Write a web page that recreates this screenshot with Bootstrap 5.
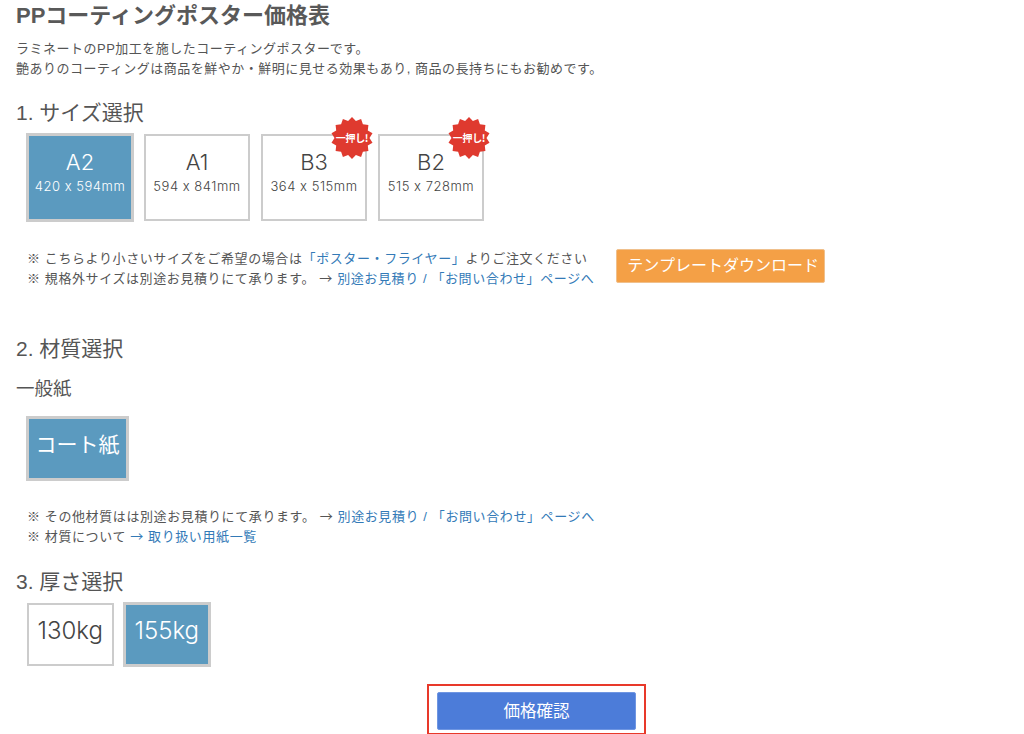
<!DOCTYPE html>
<html lang="ja">
<head>
<meta charset="utf-8">
<title>PPコーティングポスター価格表</title>
<link href="https://cdn.jsdelivr.net/npm/bootstrap@5.3.0/dist/css/bootstrap.min.css" rel="stylesheet">
<style>
body{font-family:"Liberation Sans","Noto Sans CJK JP",sans-serif;color:#555;background:#fff;overflow:hidden;height:734px}
a{color:#337ab7;text-decoration:none}
.page-wrap{padding:0 16px;width:1024px}
.page-title{font-size:22px;font-weight:700;line-height:32px;margin:0 0 7px;color:#595959}
.page-lead{font-size:13px;line-height:20px;margin:0;letter-spacing:.5px}
.step-title{font-size:21px;font-weight:400;line-height:28px;margin:0;color:#555}
.sub-title{font-size:18.5px;line-height:24px;margin:0;font-weight:400}
.opt-row{display:flex;gap:11px;padding-left:11px}
.opt-row-tight{gap:10px}
.opt-row-top{margin-top:7px}
.opt-box{position:relative;border:2px solid #ccc;background:#fff;color:#444;text-align:center;display:flex;flex-direction:column;align-items:center;font-family:Inter,"Noto Sans CJK JP",sans-serif;font-weight:300}
.opt-box.is-on{background:#5b9abf;color:#fff;outline:.5px solid #ccc}
.size-box{width:106px;height:87px;padding-top:12px}
.size-name{font-size:22px;line-height:28px}
.size-dim{font-size:13px;line-height:18px;margin-top:1px;letter-spacing:.04em}
.coat-box{width:101px;height:63px;justify-content:center;font-size:21px;white-space:nowrap;padding-bottom:7px;font-weight:400}
.weight-box{width:86.5px;height:63px;justify-content:center;font-size:24px;padding-bottom:8px}
.push-star{position:absolute;top:-19px;right:-8px;width:42px;height:42px}
.push-text{position:absolute;top:-19px;right:-8px;width:42px;line-height:42px;font-size:10px;font-weight:700;color:#fff;text-align:center;white-space:nowrap;letter-spacing:-.03em;font-family:"Noto Sans CJK JP",sans-serif}
.note-row{display:flex;align-items:center;padding-left:11px;gap:22px}
.note-text{font-size:13px;line-height:20px;margin:0;white-space:nowrap;letter-spacing:.6px}
.note-arrow{font-family:"Noto Sans CJK JP",sans-serif;line-height:1}
.tpl-btn{background:#f4a046;border:1px solid #f0c08c;color:#fff;font-size:16px;line-height:20px;padding:6px 10px;border-radius:2px;width:209px;white-space:nowrap;margin-bottom:6px}
.confirm-frame{width:219px;height:51px;border:2px solid #e8392a;margin-left:411px;padding:6px 8px}
.confirm-btn{width:199px;height:38px;background:#4c7cd9;border:1px solid #6f96e2;color:#fff;font-size:16.5px;border-radius:2px;padding:0;display:block}
.gap-b{height:20px}.gap-c{height:46px}.gap-d{height:21px}.gap-f{height:28px}.gap-f2{height:27px}.gap-g{height:14px}.gap-h{height:16px}.gap-i{height:18px}
</style>
</head>
<body>
<div class="page-wrap">
  <h1 class="page-title">PPコーティングポスター価格表</h1>
  <p class="page-lead">ラミネートのPP加工を施したコーティングポスターです。</p>
  <p class="page-lead">艶ありのコーティングは商品を鮮やか・鮮明に見せる効果もあり, 商品の長持ちにもお勧めです。</p>
  <div class="gap-b"></div>
  <h2 class="step-title">1. サイズ選択</h2>
  <div class="opt-row opt-row-top">
    <div class="opt-box size-box is-on"><span class="size-name">A2</span><span class="size-dim">420 x 594mm</span></div>
    <div class="opt-box size-box"><span class="size-name">A1</span><span class="size-dim">594 x 841mm</span></div>
    <div class="opt-box size-box"><span class="size-name">B3</span><span class="size-dim">364 x 515mm</span>
      <svg class="push-star" viewBox="-21 -21 42 42"><polygon fill="#df3a2f" points="0,-21 3.9,-17.1 9.1,-18.9 10.9,-13.7 16.4,-13.1 15.8,-7.6 20.5,-4.7 17.5,0 20.5,4.7 15.8,7.6 16.4,13.1 10.9,13.7 9.1,18.9 3.9,17.1 0,21 -3.9,17.1 -9.1,18.9 -10.9,13.7 -16.4,13.1 -15.8,7.6 -20.5,4.7 -17.5,0 -20.5,-4.7 -15.8,-7.6 -16.4,-13.1 -10.9,-13.7 -9.1,-18.9 -3.9,-17.1"/></svg>
      <span class="push-text">一押し!</span></div>
    <div class="opt-box size-box"><span class="size-name">B2</span><span class="size-dim">515 x 728mm</span>
      <svg class="push-star" viewBox="-21 -21 42 42"><polygon fill="#df3a2f" points="0,-21 3.9,-17.1 9.1,-18.9 10.9,-13.7 16.4,-13.1 15.8,-7.6 20.5,-4.7 17.5,0 20.5,4.7 15.8,7.6 16.4,13.1 10.9,13.7 9.1,18.9 3.9,17.1 0,21 -3.9,17.1 -9.1,18.9 -10.9,13.7 -16.4,13.1 -15.8,7.6 -20.5,4.7 -17.5,0 -20.5,-4.7 -15.8,-7.6 -16.4,-13.1 -10.9,-13.7 -9.1,-18.9 -3.9,-17.1"/></svg>
      <span class="push-text">一押し!</span></div>
  </div>
  <div class="gap-f"></div>
  <div class="note-row">
    <div>
      <p class="note-text">※ こちらより小さいサイズをご希望の場合は<a href="#">「ポスター・フライヤー」</a>よりご注文ください</p>
      <p class="note-text">※ 規格外サイズは別途お見積りにて承ります。 <span class="note-arrow">→</span> <a href="#">別途お見積り / 「お問い合わせ」ページへ</a></p>
    </div>
    <button type="button" class="btn tpl-btn">テンプレートダウンロード</button>
  </div>
  <div class="gap-c"></div>
  <h2 class="step-title">2. 材質選択</h2>
  <div class="gap-g"></div>
  <h3 class="sub-title">一般紙</h3>
  <div class="gap-h"></div>
  <div class="opt-row">
    <div class="opt-box coat-box is-on">コート紙</div>
  </div>
  <div class="gap-f2"></div>
  <div class="note-row">
    <div>
      <p class="note-text">※ その他材質はは別途お見積りにて承ります。 <span class="note-arrow">→</span> <a href="#">別途お見積り / 「お問い合わせ」ページへ</a></p>
      <p class="note-text">※ 材質について <a href="#"><span class="note-arrow">→</span> 取り扱い用紙一覧</a></p>
    </div>
  </div>
  <div class="gap-d"></div>
  <h2 class="step-title">3. 厚さ選択</h2>
  <div class="opt-row opt-row-tight opt-row-top">
    <div class="opt-box weight-box">130kg</div>
    <div class="opt-box weight-box is-on">155kg</div>
  </div>
  <div class="gap-i"></div>
  <div class="confirm-frame"><button type="button" class="btn confirm-btn">価格確認</button></div>
</div>
<script src="https://cdn.jsdelivr.net/npm/bootstrap@5.3.0/dist/js/bootstrap.bundle.min.js"></script>
</body>
</html>
